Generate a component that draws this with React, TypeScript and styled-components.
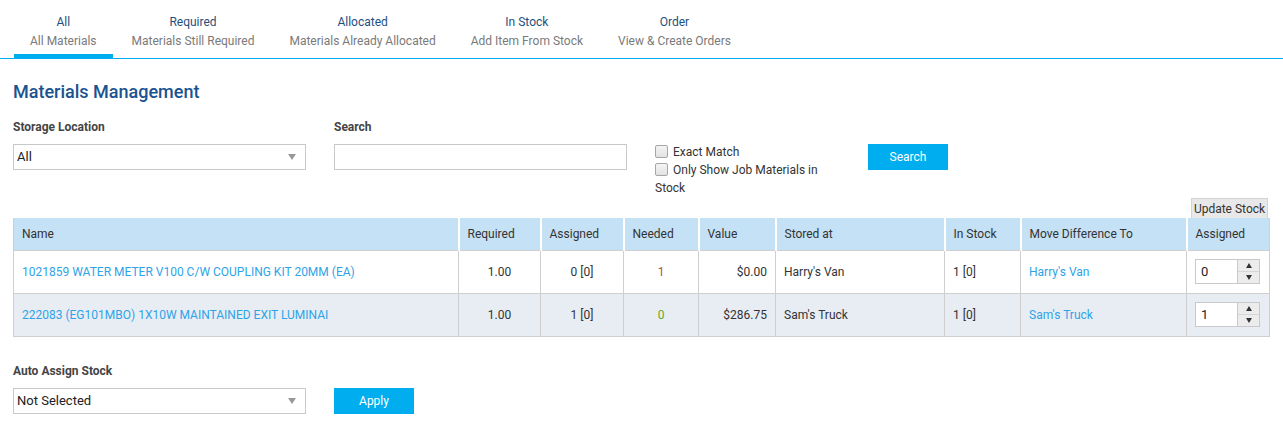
import React from "react";
import styled, { createGlobalStyle } from "styled-components";

const Global = createGlobalStyle`
  html, body { margin: 0; padding: 0; background: #fff; }
  body { font-family: Roboto, "Liberation Sans", Arial, sans-serif; font-size: 12px; color: #333; }
  * { box-sizing: border-box; }
`;

const TabBar = styled.nav`
  display: flex;
  padding-left: 14px;
  border-bottom: 1px solid #00aeef;
`;

const Tab = styled.div<{ $active?: boolean }>`
  padding: 13px 16px 3px 16px;
  text-align: center;
  border-bottom: 4px solid ${(p) => (p.$active ? "#00aeef" : "transparent")};
  margin-right: 3px;
  line-height: 19px;
  font-size: 12px;
  cursor: pointer;
`;

const TabTitle = styled.div`
  color: #1f4f7d;
`;

const TabSub = styled.div`
  color: #7a7a7a;
`;

const Page = styled.main`
  padding: 0 14px 0 13px;
`;

const Heading = styled.h1`
  margin: 22px 0 16px 0;
  font-size: 18px;
  line-height: 22px;
  font-weight: 500;
  color: #1b5390;
`;

const FilterRow = styled.div`
  display: flex;
  align-items: flex-start;
`;

const Field = styled.div<{ $w: number; $mr: number }>`
  width: ${(p) => p.$w}px;
  margin-right: ${(p) => p.$mr}px;
`;

const Label = styled.label`
  display: block;
  font-weight: 700;
  font-size: 12px;
  line-height: 16px;
  color: #444;
  margin-bottom: 9px;
`;

const SelectBox = styled.div`
  position: relative;
  height: 26px;
  border: 1px solid #c9c9c9;
  padding: 0 3px;
  line-height: 24px;
  font-size: 13px;
  color: #222;
  background: #fff;
`;

const Caret = styled.span`
  position: absolute;
  right: 9px;
  top: 9px;
  width: 0;
  height: 0;
  border-left: 4px solid transparent;
  border-right: 4px solid transparent;
  border-top: 6px solid #999;
`;

const TextInput = styled.input`
  display: block;
  width: 100%;
  height: 26px;
  border: 1px solid #c9c9c9;
  padding: 0 4px;
  font: inherit;
  outline: none;
`;

const Checks = styled.div`
  width: 170px;
  margin-top: 24px;
  margin-right: 43px;
  line-height: 18px;
  font-size: 12px;
  color: #333;
`;

const CheckLine = styled.div`
  display: block;
`;

const Box = styled.span`
  display: inline-block;
  width: 13px;
  height: 13px;
  border: 1px solid #a6a6a6;
  border-radius: 2px;
  background: linear-gradient(#f4f4f4, #e2e2e2);
  vertical-align: -2px;
  margin-right: 5px;
`;

const PrimaryButton = styled.button<{ $top?: number }>`
  width: 80px;
  height: 26px;
  margin-top: ${(p) => p.$top ?? 0}px;
  background: #00aeef;
  color: #fff;
  border: none;
  font-family: inherit;
  font-size: 12px;
  cursor: pointer;
`;

const ToolRow = styled.div`
  display: flex;
  justify-content: flex-end;
  margin-top: 1px;
  padding-right: 1px;
`;

const SmallButton = styled.button`
  width: 77px;
  height: 20px;
  padding: 0;
  background: #e8e8e8;
  border: 1px solid #d3d3d3;
  border-bottom: none;
  font-family: inherit;
  font-size: 12px;
  color: #333;
  line-height: 18px;
  white-space: nowrap;
`;

const Table = styled.table`
  width: 100%;
  border-collapse: collapse;
  table-layout: fixed;
  border: 1px solid #cfcfcf;
  border-top: none;
  font-size: 12px;
`;

const Th = styled.th`
  background: #c5e1f5;
  height: 32px;
  text-align: left;
  font-weight: 400;
  color: #333;
  padding: 0 8px;
  border-left: 2px solid #fff;
  &:first-child { border-left: none; }
`;

const Tr = styled.tr<{ $alt?: boolean }>`
  background: ${(p) => (p.$alt ? "#e8edf4" : "#fff")};
  border-top: 1px solid #cfcfcf;
`;

const Td = styled.td<{ $align?: string; $color?: string }>`
  height: 43px;
  padding: 0 8px;
  text-align: ${(p) => p.$align ?? "left"};
  color: ${(p) => p.$color ?? "#333"};
  border-left: 1px solid #cfcfcf;
  white-space: nowrap;
  overflow: hidden;
  &:first-child { border-left: none; }
`;

const Link = styled.a`
  color: #2ea3e8;
  text-decoration: none;
`;

const Spin = styled.div`
  display: flex;
  width: 65px;
  height: 25px;
  border: 1px solid #c9c9c9;
  background: #fff;
`;

const SpinValue = styled.div`
  flex: 1;
  padding-left: 5px;
  line-height: 23px;
  font-size: 13px;
  color: #222;
`;

const SpinButtons = styled.div`
  width: 22px;
  border-left: 1px solid #c9c9c9;
  background: #ececec;
  display: flex;
  flex-direction: column;
`;

const SpinBtn = styled.div<{ $up?: boolean }>`
  flex: 1;
  display: flex;
  align-items: center;
  justify-content: center;
  border-top: ${(p) => (p.$up ? "none" : "1px solid #d6d6d6")};
  &::after {
    content: "";
    width: 0;
    height: 0;
    border-left: 3.5px solid transparent;
    border-right: 3.5px solid transparent;
    ${(p) => (p.$up ? "border-bottom: 5px solid #333;" : "border-top: 5px solid #333;")}
  }
`;

const Bottom = styled.section`
  margin-top: 26px;
`;

const rows = [
  {
    name: "1021859 WATER METER V100 C/W COUPLING KIT 20MM (EA)",
    required: "1.00",
    assigned: "0 [0]",
    needed: "1",
    neededColor: "#b0563a",
    value: "$0.00",
    stored: "Harry's Van",
    inStock: "1 [0]",
    move: "Harry's Van",
    qty: "0",
  },
  {
    name: "222083 (EG101MBO) 1X10W MAINTAINED EXIT LUMINAI",
    required: "1.00",
    assigned: "1 [0]",
    needed: "0",
    neededColor: "#6aa61f",
    value: "$286.75",
    stored: "Sam's Truck",
    inStock: "1 [0]",
    move: "Sam's Truck",
    qty: "1",
  },
];

const tabs = [
  ["All", "All Materials"],
  ["Required", "Materials Still Required"],
  ["Allocated", "Materials Already Allocated"],
  ["In Stock", "Add Item From Stock"],
  ["Order", "View & Create Orders"],
];

const cols = [445, 82, 83, 75, 77, 169, 76, 166, 83];

export default function App() {
  return (
    <>
      <Global />
      <TabBar>
        {tabs.map(([t, s], i) => (
          <Tab key={t} $active={i === 0}>
            <TabTitle>{t}</TabTitle>
            <TabSub>{s}</TabSub>
          </Tab>
        ))}
      </TabBar>
      <Page>
        <Heading>Materials Management</Heading>
        <FilterRow>
          <Field $w={293} $mr={28}>
            <Label>Storage Location</Label>
            <SelectBox>
              All
              <Caret />
            </SelectBox>
          </Field>
          <Field $w={293} $mr={28}>
            <Label>Search</Label>
            <TextInput />
          </Field>
          <Checks>
            <CheckLine>
              <Box />
              Exact Match
            </CheckLine>
            <CheckLine>
              <Box />
              Only Show Job Materials in Stock
            </CheckLine>
          </Checks>
          <PrimaryButton $top={25}>Search</PrimaryButton>
        </FilterRow>
        <ToolRow>
          <SmallButton>Update Stock</SmallButton>
        </ToolRow>
        <Table>
          <colgroup>
            {cols.map((w, i) => (
              <col key={i} style={{ width: w }} />
            ))}
          </colgroup>
          <thead>
            <tr>
              <Th>Name</Th>
              <Th>Required</Th>
              <Th>Assigned</Th>
              <Th>Needed</Th>
              <Th>Value</Th>
              <Th>Stored at</Th>
              <Th>In Stock</Th>
              <Th>Move Difference To</Th>
              <Th>Assigned</Th>
            </tr>
          </thead>
          <tbody>
            {rows.map((r, i) => (
              <Tr key={r.name} $alt={i % 2 === 1}>
                <Td>
                  <Link href="#">{r.name}</Link>
                </Td>
                <Td $align="center">{r.required}</Td>
                <Td $align="center">{r.assigned}</Td>
                <Td $align="center" $color={r.neededColor}>
                  {r.needed}
                </Td>
                <Td $align="right">{r.value}</Td>
                <Td>{r.stored}</Td>
                <Td>{r.inStock}</Td>
                <Td>
                  <Link href="#">{r.move}</Link>
                </Td>
                <Td>
                  <Spin>
                    <SpinValue>{r.qty}</SpinValue>
                    <SpinButtons>
                      <SpinBtn $up />
                      <SpinBtn />
                    </SpinButtons>
                  </Spin>
                </Td>
              </Tr>
            ))}
          </tbody>
        </Table>
        <Bottom>
          <FilterRow>
            <Field $w={293} $mr={28}>
              <Label>Auto Assign Stock</Label>
              <SelectBox>
                Not Selected
                <Caret />
              </SelectBox>
            </Field>
            <PrimaryButton $top={25}>Apply</PrimaryButton>
          </FilterRow>
        </Bottom>
      </Page>
    </>
  );
}
